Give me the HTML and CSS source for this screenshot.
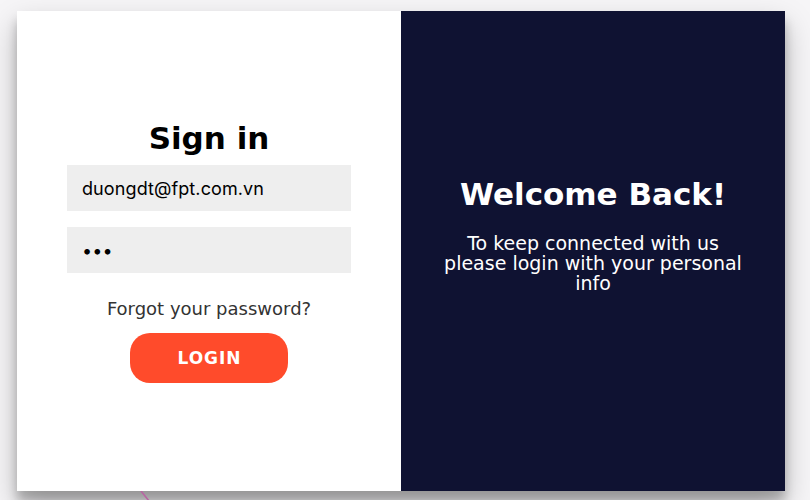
FILE: index.html
```html
<!DOCTYPE html>
<html>
<head>
<meta charset="utf-8">
<link rel="stylesheet" href="styles.css">
</head>
<body>
<div class="page">
  <div class="card">
    <form class="signin">
      <h1 class="title">Sign in</h1>
      <input class="field" type="email" value="duongdt@fpt.com.vn">
      <input class="field" type="password" value="abc">
      <a class="forgot" href="#">Forgot your password?</a>
      <button class="btn" type="button">Login</button>
    </form>
    <div class="overlay">
      <h1 class="title light">Welcome Back!</h1>
      <p class="lead">To keep connected with us please login with your personal info</p>
    </div>
  </div>
  <svg class="stroke" width="12" height="12" viewBox="0 0 12 12"><line x1="1" y1="0" x2="9" y2="10" stroke="#b865a3" stroke-width="1.6"/></svg>
</div>
</body>
</html>
```
FILE: styles.css
```css
* { box-sizing: border-box; }
html, body { margin: 0; padding: 0; }
body {
  background: #f6f5f7;
  font-family: "DejaVu Sans", "Open Sans", sans-serif;
  width: 810px;
  height: 500px;
  overflow: hidden;
}
.page {
  position: relative;
  padding: 11px 25px 9px 17px;
}
.card {
  display: flex;
  width: 768px;
  height: 480px;
  background: #fff;
  box-shadow: 0 14px 28px rgba(0,0,0,0.25), 0 10px 10px rgba(0,0,0,0.22);
  position: relative;
  z-index: 1;
}
.signin {
  width: 384px;
  display: flex;
  flex-direction: column;
  align-items: center;
  padding: 109px 50px 0;
}
.title {
  margin: 0 0 1px;
  font-size: 31px;
  line-height: 36px;
  font-weight: 700;
  color: #000;
}
.field {
  flex: none;
  width: 284px;
  height: 46px;
  margin: 8px 0;
  border: none;
  background: #eee;
  padding: 0 15px;
  font-family: "Inter", sans-serif;
  font-size: 18px;
  letter-spacing: 0.1px;
  color: #000;
  outline: none;
}
.forgot {
  margin: 17px 0 14px;
  font-size: 18px;
  line-height: 21px;
  color: #333;
  text-decoration: none;
}
.btn {
  flex: none;
  width: 158px;
  height: 50px;
  border: none;
  border-radius: 20px;
  background: #ff4b2b;
  color: #fff;
  font-family: "DejaVu Sans", sans-serif;
  font-size: 17px;
  font-weight: 700;
  letter-spacing: 1px;
  text-indent: 1px;
  text-transform: uppercase;
  padding: 0;
}
.overlay {
  width: 384px;
  background: #0f1232;
  color: #fff;
  display: flex;
  flex-direction: column;
  align-items: center;
  padding: 165px 37px 0;
  text-align: center;
}
.title.light { color: #fff; margin: 0; }
.lead {
  margin: 21px 0 0;
  font-size: 19px;
  line-height: 20px;
}
.stroke {
  position: absolute;
  left: 140px;
  top: 491px;
  z-index: 2;
}
```
